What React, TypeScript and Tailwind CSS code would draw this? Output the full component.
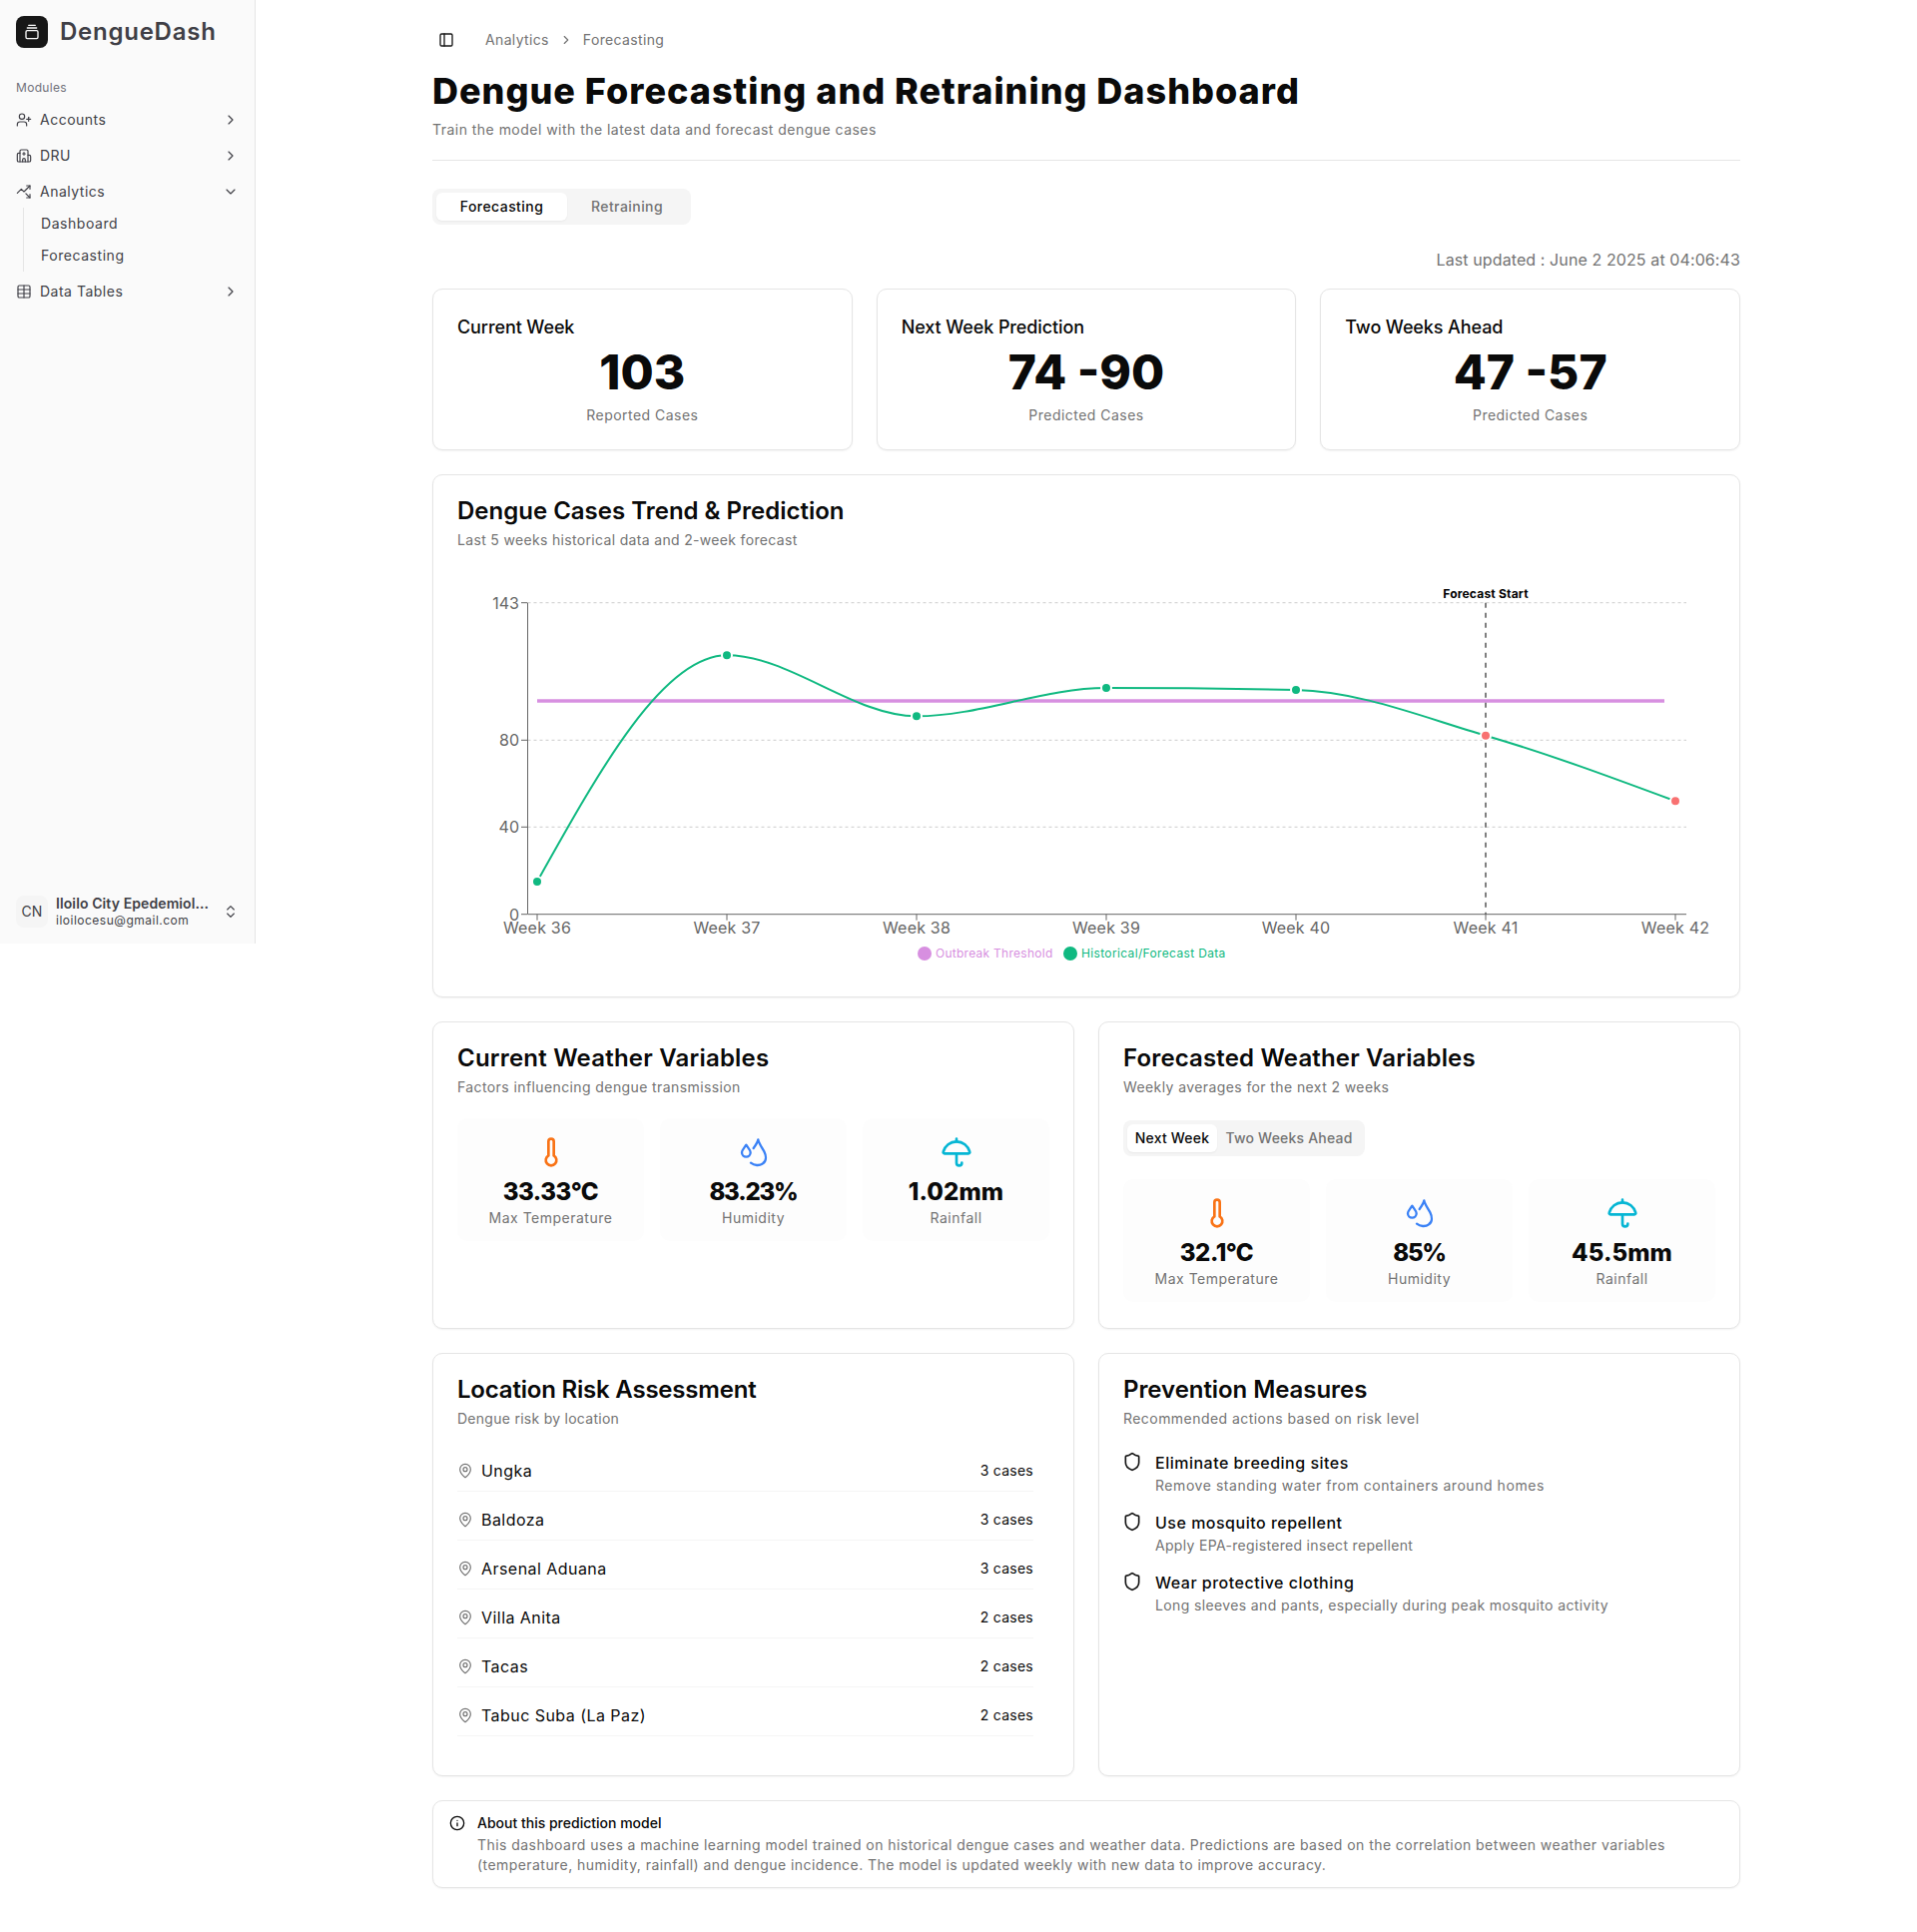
import React from "react";
import {
  ChevronRight, ChevronDown, ChevronsUpDown, UserPlus, Hospital, TrendingUpDown, Table, PanelLeft, MapPin, Shield, Info, Umbrella, Thermometer, GalleryVerticalEnd,
} from "lucide-react";

function monotone(pts: [number, number][]) {
  const n = pts.length;
  const t: number[] = [];
  const d: number[] = [];
  for (let i = 0; i < n - 1; i++) d.push((pts[i + 1][1] - pts[i][1]) / (pts[i + 1][0] - pts[i][0]));
  for (let i = 1; i < n - 1; i++) {
    const h0 = pts[i][0] - pts[i - 1][0];
    const h1 = pts[i + 1][0] - pts[i][0];
    const p = (d[i - 1] * h1 + d[i] * h0) / (h0 + h1);
    const s0 = d[i - 1];
    const s1 = d[i];
    t[i] = (Math.sign(s0) + Math.sign(s1)) * Math.min(Math.abs(s0), Math.abs(s1), 0.5 * Math.abs(p)) || 0;
  }
  t[0] = (3 * d[0] - t[1]) / 2;
  t[n - 1] = (3 * d[n - 2] - t[n - 2]) / 2;
  let s = `M${pts[0][0]},${pts[0][1]}`;
  for (let i = 0; i < n - 1; i++) {
    const h = (pts[i + 1][0] - pts[i][0]) / 3;
    s += `C${pts[i][0] + h},${pts[i][1] + h * t[i]} ${pts[i + 1][0] - h},${pts[i + 1][1] - h * t[i + 1]} ${pts[i + 1][0]},${pts[i + 1][1]}`;
  }
  return s;
}

const F = "font-['Inter','Liberation_Sans',sans-serif]";

function Droplets({ className }: { className?: string }) {
  return (
    <svg viewBox="23 -4 96 96" fill="none" stroke="currentColor" strokeWidth="7" strokeLinecap="round" strokeLinejoin="round" className={className}>
      <path d="M48 22C42 32 35 37 35 45a13 13 0 0 0 26 0C61 37 54 32 48 22Z" />
      <path d="M70 32C76 24 82 16 84 6C86 18 96 30 102 42C108 54 110 70 98 78C88 86 72 84 62 76" />
    </svg>
  );
}

function NavRow({ icon, label, open }: { icon: React.ReactNode; label: string; open?: boolean }) {
  return (
    <div className="flex h-9 items-center gap-2 pl-4 pr-4 text-sm tracking-[0.5px] text-[#3f3f46]">
      <span className="flex w-4 justify-center">{icon}</span>
      <span className="flex-1">{label}</span>
      {open ? <ChevronDown size={16} strokeWidth={1.75} /> : <ChevronRight size={16} strokeWidth={1.75} />}
    </div>
  );
}

function StatCard({ title, value, sub }: { title: string; value: string; sub: string }) {
  return (
    <div className="flex h-[162px] flex-col rounded-[10px] border border-[#e5e5e5] bg-white px-6 pt-[26px] shadow-xs">
      <div className="text-lg font-medium leading-6 tracking-[-0.1px] text-[#0a0a0a]">{title}</div>
      <div className="mt-[9px] text-center text-5xl font-extrabold leading-[48px] tracking-[0px] text-[#0a0a0a]">{value}</div>
      <div className="mt-[9px] text-center text-sm leading-5 tracking-[0.47px] text-[#737373]">{sub}</div>
    </div>
  );
}

function Tile({ icon, value, label, tr }: { icon: React.ReactNode; value: string; label: string; tr: string }) {
  return (
    <div className="flex h-[123px] flex-col items-center rounded-[10px] bg-[#fdfdfd] pt-[18px]">
      <div className="flex h-8 items-center justify-center">{icon}</div>
      <div className={`mt-[8px] text-2xl font-extrabold leading-8 text-[#0a0a0a] ${tr}`}>{value}</div>
      <div className="text-sm leading-5 tracking-[0.5px] text-[#737373]">{label}</div>
    </div>
  );
}

function Tiles({ t, h, r }: { t: string; h: string; r: string }) {
  return (
    <div className="grid grid-cols-3 gap-4">
      <Tile tr="tracking-[-0.5px]" icon={<Thermometer size={32} strokeWidth={2} className="text-[#f97316]" />} value={t} label="Max Temperature" />
      <Tile tr="tracking-[-1.2px]" icon={<Droplets className="h-8 w-8 text-[#3b82f6]" />} value={h} label="Humidity" />
      <Tile tr="tracking-[0.1px]" icon={<Umbrella size={32} strokeWidth={2} className="text-[#06b6d4]" />} value={r} label="Rainfall" />
    </div>
  );
}

function CardHead({ title, sub, tr, subTr = "tracking-[0.4px]" }: { title: string; sub: string; tr: string; subTr?: string }) {
  return (
    <>
      <div className={`text-2xl font-semibold leading-8 text-[#0a0a0a] ${tr}`}>{title}</div>
      <div className={`mt-[3px] text-sm leading-5 text-[#737373] ${subTr}`}>{sub}</div>
    </>
  );
}

function Chart() {
  const X0 = 434;
  const Y0 = 476;
  const xs = [538, 728, 918, 1108, 1298, 1488, 1678];
  const labels = ["Week 36", "Week 37", "Week 38", "Week 39", "Week 40", "Week 41", "Week 42"];
  const ys = [883, 656.3, 717.3, 689, 691, 736.7, 802.3];
  const pts = xs.map((x, i) => [x - X0, ys[i] - Y0] as [number, number]);
  const yTicks: [string, number][] = [["143", 603.7], ["80", 741.3], ["40", 828.3], ["0", 915.7]];
  return (
    <svg width="1308" height="522" className="absolute left-0 top-0" style={{ fontFamily: "Inter, sans-serif" }}>
      {yTicks.slice(0, 3).map(([, y]) => (
        <line key={y} x1={528.5 - X0} x2={1689 - X0} y1={y - Y0} y2={y - Y0} stroke="#ccc" strokeDasharray="3 3" />
      ))}
      <line x1={528.5 - X0} x2={528.5 - X0} y1={603.7 - Y0} y2={915.7 - Y0} stroke="#666" />
      <line x1={528.5 - X0} x2={1689 - X0} y1={915.7 - Y0} y2={915.7 - Y0} stroke="#666" />
      {yTicks.map(([l, y]) => (
        <g key={l}>
          <line x1={522 - X0} x2={528 - X0} y1={y - Y0} y2={y - Y0} stroke="#666" />
          <text x={520 - X0} y={y - Y0 + 6} textAnchor="end" fontSize="16" fill="#666">{l}</text>
        </g>
      ))}
      {xs.map((x, i) => (
        <g key={x}>
          <line x1={x - X0} x2={x - X0} y1={915.7 - Y0} y2={921.7 - Y0} stroke="#666" />
          <text x={x - X0} y={935 - Y0} textAnchor="middle" fontSize="16" fill="#666" className="tracking-[0.2px]">{labels[i]}</text>
        </g>
      ))}
      <line x1={538 - X0} x2={1667 - X0} y1={702 - Y0} y2={702 - Y0} stroke="#d78fe0" strokeWidth="3.6" />
      <line x1={1488 - X0} x2={1488 - X0} y1={603.7 - Y0} y2={915.7 - Y0} stroke="#555" strokeWidth="1.5" strokeDasharray="5 5" />
      <text x={1488 - X0} y={599 - Y0} textAnchor="middle" fontSize="12" fontWeight="700" fill="#000" className="tracking-[0.2px]">Forecast Start</text>
      <path d={monotone(pts)} fill="none" stroke="#10b981" strokeWidth="2" />
      {pts.map(([x, y], i) => (
        <circle key={x} cx={x} cy={y} r="5" fill={i >= 5 ? "#f87171" : "#10b981"} stroke="#fff" strokeWidth="2" />
      ))}
      <circle cx={926 - X0} cy={955 - Y0} r="7" fill="#d78fe0" />
      <text x={937 - X0} y={959 - Y0} fontSize="12" fill="#d78fe0" className="tracking-[0.27px]">Outbreak Threshold</text>
      <circle cx={1072 - X0} cy={955 - Y0} r="7" fill="#10b981" />
      <text x={1083 - X0} y={959 - Y0} fontSize="12" fill="#10b981" className="tracking-[0.35px]">Historical/Forecast Data</text>
    </svg>
  );
}

const locations = [
  ["Ungka", "3 cases"],
  ["Baldoza", "3 cases"],
  ["Arsenal Aduana", "3 cases"],
  ["Villa Anita", "2 cases"],
  ["Tacas", "2 cases"],
  ["Tabuc Suba (La Paz)", "2 cases"],
];

const measures = [
  ["Eliminate breeding sites", "Remove standing water from containers around homes", "tracking-[0.55px]"],
  ["Use mosquito repellent", "Apply EPA-registered insect repellent", "tracking-[0.32px]"],
  ["Wear protective clothing", "Long sleeves and pants, especially during peak mosquito activity", "tracking-[0.37px]"],
];

export default function App() {
  return (
    <div className={`${F} relative flex min-h-[1935px] items-start bg-white`}>
      <aside className="flex h-[945px] w-[256px] shrink-0 flex-col border-r border-[#e5e5e5] bg-[#fafafa]">
        <div className="flex items-center gap-3 pl-4 pt-4">
          <div className="flex h-8 w-8 items-center justify-center rounded-lg bg-[#171717]">
            <GalleryVerticalEnd size={16} className="text-[#fafafa]" />
          </div>
          <div className="text-2xl font-semibold leading-8 tracking-[0.75px] text-[#3f3f46]">DengueDash</div>
        </div>
        <div className="mt-[32px] pl-4 text-xs leading-4 tracking-[0.3px] text-[#71717a]">Modules</div>
        <div className="mt-[6px]">
          <NavRow icon={<UserPlus size={16} strokeWidth={1.75} />} label="Accounts" />
          <NavRow icon={<Hospital size={16} strokeWidth={1.75} />} label="DRU" />
          <NavRow icon={<TrendingUpDown size={16} strokeWidth={1.75} />} label="Analytics" open />
          <div className="-mt-[2px] mb-[2px] ml-[23px] border-l border-[#e5e5e5] pl-[17px] text-sm tracking-[0.55px] text-[#3f3f46]">
            <div className="flex h-8 items-center">Dashboard</div>
            <div className="flex h-8 items-center">Forecasting</div>
          </div>
          <NavRow icon={<Table size={16} strokeWidth={1.75} />} label="Data Tables" />
        </div>
        <div className="mt-auto flex items-center pb-[15px] pl-4 pr-4">
          <div className="flex h-8 w-8 items-center justify-center rounded-lg bg-[#f5f5f5] text-sm text-[#3f3f46]">CN</div>
          <div className="ml-2 min-w-0 flex-1">
            <div className="truncate text-sm font-semibold leading-[18px] tracking-[0.1px] text-[#3f3f46]">Iloilo City Epedemiol...</div>
            <div className="text-xs leading-4 tracking-[0.5px] text-[#3f3f46]">iloilocesu@gmail.com</div>
          </div>
          <ChevronsUpDown size={16} strokeWidth={1.75} className="text-[#3f3f46]" />
        </div>
      </aside>
      <main className="flex-1 pb-[44px] pl-[177px]">
        <div className="w-[1310px]">
          <div className="flex h-[80px] items-center pl-[6px] text-sm tracking-[0.35px] text-[#737373]">
            <PanelLeft size={16} strokeWidth={2} className="text-[#171717]" />
            <span className="ml-[31px]">Analytics</span>
            <ChevronRight size={14} className="mx-[10px]" />
            <span>Forecasting</span>
          </div>
          <h1 className="mt-[-9px] text-4xl font-extrabold leading-10 tracking-[0.99px] text-[#0a0a0a]">Dengue Forecasting and Retraining Dashboard</h1>
          <p className="mt-[9px] text-sm leading-5 tracking-[0.47px] text-[#737373]">Train the model with the latest data and forecast dengue cases</p>
          <div className="mt-[20px] h-px bg-[#e5e5e5]" />
          <div className="mt-[28px] inline-flex h-9 w-[259px] items-center rounded-lg bg-[#f5f5f5] p-1 text-sm font-medium tracking-[0.45px]">
            <div className="flex h-7 w-[131px] items-center justify-center rounded-md bg-white text-[#0a0a0a] shadow-xs">Forecasting</div>
            <div className="flex h-7 flex-1 items-center justify-center text-[#737373]">Retraining</div>
          </div>
          <div className="mt-[23px] text-right text-base leading-6 tracking-[0.1px] text-[#737373]">Last updated : June 2 2025 at 04:06:43</div>
          <div className="mt-[17px] grid grid-cols-3 gap-6">
            <StatCard title="Current Week" value="103" sub="Reported Cases" />
            <StatCard title="Next Week Prediction" value="74 -90" sub="Predicted Cases" />
            <StatCard title="Two Weeks Ahead" value="47 -57" sub="Predicted Cases" />
          </div>
          <div className="relative mt-6 h-[524px] rounded-[10px] border border-[#e5e5e5] bg-white px-6 pt-5 shadow-xs">
            <CardHead title="Dengue Cases Trend & Prediction" sub="Last 5 weeks historical data and 2-week forecast" tr="tracking-[0px]" subTr="tracking-[0.33px]" />
            <Chart />
          </div>
          <div className="mt-6 grid grid-cols-2 gap-6">
            <div className="h-[308px] rounded-[10px] border border-[#e5e5e5] bg-white px-6 pt-[20px] shadow-xs">
              <CardHead title="Current Weather Variables" sub="Factors influencing dengue transmission" tr="tracking-[0.2px]" />
              <div className="mt-[21px]"><Tiles t="33.33°C" h="83.23%" r="1.02mm" /></div>
            </div>
            <div className="h-[308px] rounded-[10px] border border-[#e5e5e5] bg-white px-6 pt-[20px] shadow-xs">
              <CardHead title="Forecasted Weather Variables" sub="Weekly averages for the next 2 weeks" tr="tracking-[0.15px]" />
              <div className="mt-[23px] inline-flex h-9 w-[242px] items-center rounded-lg bg-[#f5f5f5] p-1 text-sm font-medium tracking-[0.2px]">
                <div className="flex h-7 w-[90px] items-center justify-center rounded-md bg-white text-[#0a0a0a] shadow-xs">Next Week</div>
                <div className="flex h-7 flex-1 items-center justify-center text-[#737373]">Two Weeks Ahead</div>
              </div>
              <div className="mt-[23px]"><Tiles t="32.1°C" h="85%" r="45.5mm" /></div>
            </div>
          </div>
          <div className="mt-6 grid grid-cols-2 gap-6">
            <div className="h-[424px] rounded-[10px] border border-[#e5e5e5] bg-white px-6 pt-[20px] shadow-xs">
              <CardHead title="Location Risk Assessment" sub="Dengue risk by location" tr="tracking-[-0.2px]" subTr="tracking-[0.27px]" />
              <div className="mt-[14px] pr-4">
                {locations.map(([n, c]) => (
                  <div key={n} className="flex h-[49px] items-end border-b border-[#f5f5f5] pb-2">
                    <span className="flex h-6 items-center">
                      <MapPin size={16} strokeWidth={1.75} className="text-[#737373]" />
                    </span>
                    <span className="ml-2 flex-1 text-base leading-6 tracking-[0.45px] text-[#0a0a0a]">{n}</span>
                    <span className="text-sm leading-6 tracking-[0.25px] text-[#0a0a0a]">{c}</span>
                  </div>
                ))}
              </div>
            </div>
            <div className="h-[424px] rounded-[10px] border border-[#e5e5e5] bg-white px-6 pt-[20px] shadow-xs">
              <CardHead title="Prevention Measures" sub="Recommended actions based on risk level" tr="tracking-[-0.06px]" subTr="tracking-[0.45px]" />
              <div className="mt-[22px] flex flex-col gap-[15px]">
                {measures.map(([t, d, tr]) => (
                  <div key={t} className="flex gap-[13px]">
                    <Shield size={20} strokeWidth={2} className="-ml-px mt-[1px] shrink-0 text-[#171717]" />
                    <div>
                      <div className="text-base font-medium leading-6 tracking-[0.5px] text-[#0a0a0a]">{t}</div>
                      <div className={`mt-[1px] text-sm leading-5 text-[#737373] ${tr}`}>{d}</div>
                    </div>
                  </div>
                ))}
              </div>
            </div>
          </div>
          <div className="mt-6 flex h-[88px] gap-3 rounded-[10px] border border-[#e5e5e5] bg-white px-4 pt-[12px] shadow-xs">
            <Info size={16} strokeWidth={2} className="mt-[2px] shrink-0 text-[#0a0a0a]" />
            <div>
              <div className="text-sm font-medium leading-5 text-[#0a0a0a]">About this prediction model</div>
              <div className="mt-[2px] text-sm leading-5 tracking-[0.44px] text-[#737373]">This dashboard uses a machine learning model trained on historical dengue cases and weather data. Predictions are based on the correlation between weather variables (temperature, humidity, rainfall) and dengue incidence. The model is updated weekly with new data to improve accuracy.</div>
            </div>
          </div>
        </div>
      </main>
    </div>
  );
}
